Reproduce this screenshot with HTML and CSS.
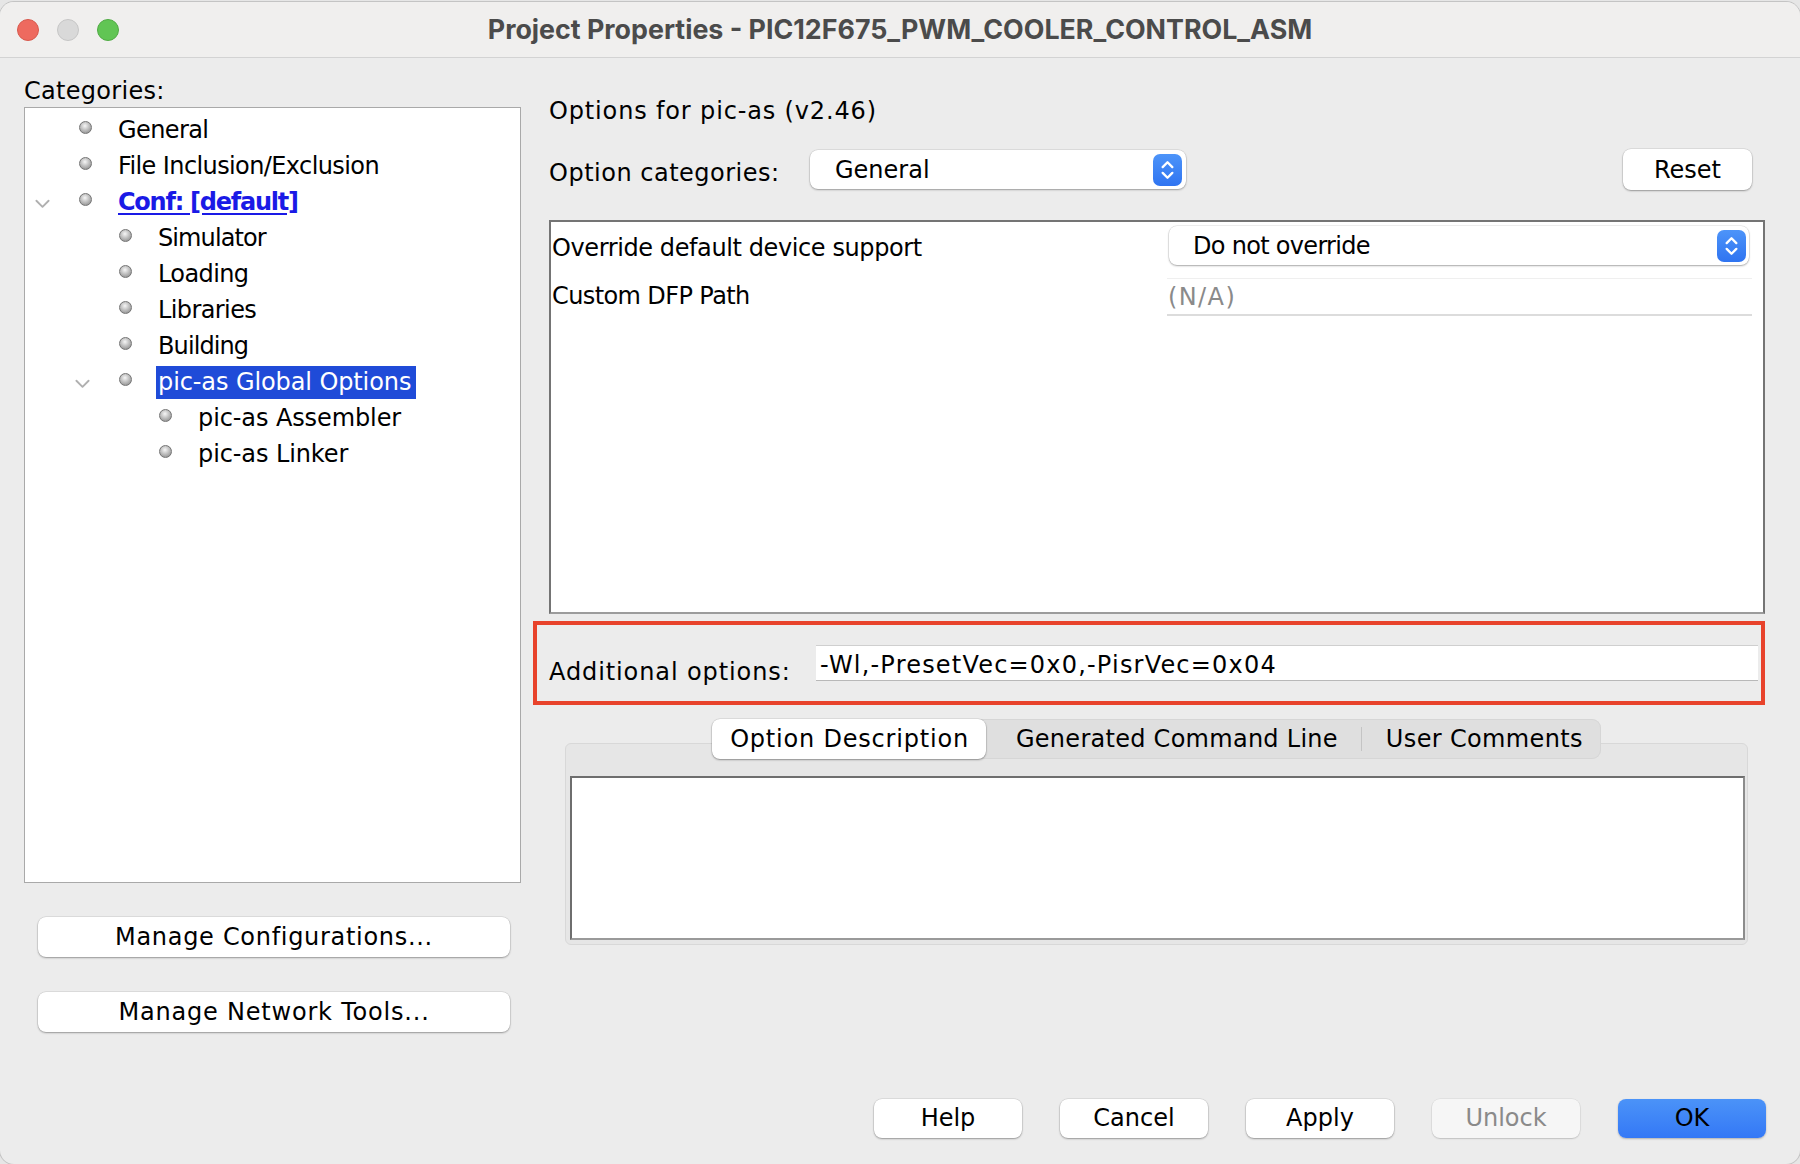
FILE: index.html
```html
<!DOCTYPE html>
<html>
<head>
<meta charset="utf-8">
<title>Project Properties</title>
<link rel="stylesheet" href="styles.css">
</head>
<body>
<div class="window">
  <div class="titlebar">
    <div class="lights">
      <span class="light red"></span>
      <span class="light gray"></span>
      <span class="light green"></span>
    </div>
    <div class="title">Project Properties - PIC12F675_PWM_COOLER_CONTROL_ASM</div>
    <div></div>
  </div>

  <div class="content">
    <div class="left">
      <div class="cat-label">Categories:</div>
      <div class="tree">
        <div class="row lvl0"><span class="tw"></span><span class="bullet"></span><span class="label">General</span></div>
        <div class="row lvl0"><span class="tw"></span><span class="bullet"></span><span class="label">File Inclusion/Exclusion</span></div>
        <div class="row lvl0"><span class="tw"><svg class="chev" viewBox="0 0 16 10"><path d="M1.5 1.5 L8 8 L14.5 1.5"/></svg></span><span class="bullet"></span><span class="label link">Conf: [default]</span></div>
        <div class="row lvl1"><span class="tw"></span><span class="bullet"></span><span class="label tight">Simulator</span></div>
        <div class="row lvl1"><span class="tw"></span><span class="bullet"></span><span class="label">Loading</span></div>
        <div class="row lvl1"><span class="tw"></span><span class="bullet"></span><span class="label">Libraries</span></div>
        <div class="row lvl1"><span class="tw"></span><span class="bullet"></span><span class="label tight">Building</span></div>
        <div class="row lvl1"><span class="tw"><svg class="chev" viewBox="0 0 16 10"><path d="M1.5 1.5 L8 8 L14.5 1.5"/></svg></span><span class="bullet"></span><span class="label pic selected">pic-as Global Options</span></div>
        <div class="row lvl2"><span class="tw"></span><span class="bullet"></span><span class="label pic">pic-as Assembler</span></div>
        <div class="row lvl2"><span class="tw"></span><span class="bullet"></span><span class="label pic">pic-as Linker</span></div>
      </div>
      <div class="btn wide first">Manage Configurations...</div>
      <div class="btn wide second">Manage Network Tools...</div>
    </div>

    <div class="right">
      <div class="opts-title">Options for pic-as (v2.46)</div>
      <div class="cat-row">
        <div class="cat-row-label">Option categories:</div>
        <div class="select cat-select">
          <span class="select-text">General</span>
          <span class="stepper"><svg viewBox="0 0 30 32"><path d="M10 13 L15 8 L20 13 M10 19 L15 24 L20 19"/></svg></span>
        </div>
        <div class="btn reset">Reset</div>
      </div>

      <div class="table">
        <div class="prop-row first-row">
          <div class="prop-name override">Override default device support</div>
          <div class="select prop-select">
            <span class="select-text dno">Do not override</span>
            <span class="stepper"><svg viewBox="0 0 30 32"><path d="M10 13 L15 8 L20 13 M10 19 L15 24 L20 19"/></svg></span>
          </div>
        </div>
        <div class="prop-row second-row">
          <div class="prop-name dfp">Custom DFP Path</div>
          <div class="na-field">(N/A)</div>
        </div>
      </div>

      <div class="red-box">
        <div class="add-label">Additional options:</div>
        <div class="add-field">-Wl,-PresetVec=0x0,-PisrVec=0x04</div>
      </div>

      <div class="tabs-wrap">
        <div class="tabbar">
          <div class="tabgroup">
            <div class="tab active">Option Description</div>
            <div class="tab gen">Generated Command Line</div>
            <div class="tab-sep"></div>
            <div class="tab user">User Comments</div>
          </div>
        </div>
        <div class="panel">
          <div class="desc"></div>
        </div>
      </div>
    </div>
  </div>

  <div class="footer">
    <div class="btn foot">Help</div>
    <div class="btn foot">Cancel</div>
    <div class="btn foot">Apply</div>
    <div class="btn foot disabled">Unlock</div>
    <div class="btn foot ok">OK</div>
  </div>
</div>
</body>
</html>
```

FILE: styles.css
```css
html, body {
  margin: 0;
  padding: 0;
}
body {
  width: 1800px;
  height: 1164px;
  overflow: hidden;
  background: #e6e6e6;
  font-family: "DejaVu Sans", "Liberation Sans", sans-serif;
  font-size: 24px;
  color: #000;
}

.window {
  margin-top: 2px;
  height: 1162px;
  box-sizing: border-box;
  background: #ececec;
  border-radius: 14px;
  box-shadow: 0 0 0 1px #c4c4c4;
  display: flex;
  flex-direction: column;
  overflow: hidden;
}

/* title bar */
.titlebar {
  flex: none;
  height: 55px;
  background: #f0efee;
  border-bottom: 1px solid #d3d3d3;
  display: grid;
  grid-template-columns: 1fr auto 1fr;
  align-items: center;
}
.lights {
  display: flex;
  gap: 18px;
  padding-left: 17px;
}
.light {
  width: 22px;
  height: 22px;
  border-radius: 50%;
  box-sizing: border-box;
}
.light.red { background: #ee6a5f; border: 1px solid #d8594d; }
.light.gray { background: #d9d9d9; border: 1px solid #c6c6c6; }
.light.green { background: #61c554; border: 1px solid #50ab44; }
.title {
  font-family: "Inter", "Liberation Sans", sans-serif;
  font-weight: 700;
  font-size: 26.8px;
  color: #4b4b4b;
  white-space: nowrap;
  padding-bottom: 2px;
}

/* content */
.content {
  display: flex;
  padding: 18px 0 0 24px;
}
.left {
  width: 497px;
  flex: none;
  display: flex;
  flex-direction: column;
}
.cat-label {
  line-height: 30px;
  height: 30px;
  margin-bottom: 1px;
  letter-spacing: 0.3px;
}
.tree {
  height: 776px;
  box-sizing: border-box;
  background: #fff;
  border: 1px solid #a9a9a9;
  padding-top: 4px;
}
.row {
  height: 36px;
  display: flex;
  align-items: center;
}
.row.lvl1 { padding-left: 40px; }
.row.lvl2 { padding-left: 80px; }
.tw {
  width: 55px;
  flex: none;
  display: flex;
  align-items: center;
}
.chev {
  width: 15px;
  height: 10px;
  margin-left: 10px;
  margin-top: 4px;
  fill: none;
  stroke: #b0b0b0;
  stroke-width: 2;
  stroke-linecap: round;
  stroke-linejoin: round;
}
.bullet {
  width: 13px;
  height: 13px;
  flex: none;
  border-radius: 50%;
  box-sizing: border-box;
  margin-top: -6px;
  margin-left: -1px;
  margin-right: 26px;
  background: radial-gradient(circle at 45% 35%, #f6f6f6 0%, #c0c0c0 45%, #808080 100%);
  border: 1px solid #747474;
}
.label {
  white-space: nowrap;
  line-height: 33px;
  letter-spacing: -0.6px;
}
.label.tight { letter-spacing: -0.9px; }
.label.pic { letter-spacing: -0.1px; }
.label.link {
  color: #1a1ae6;
  font-weight: bold;
  letter-spacing: -1.25px;
  text-decoration: underline;
  text-underline-offset: 3px;
}
.label.selected {
  background: #1f4bd8;
  color: #fff;
  margin-left: -2px;
  padding: 0 5px 0 2px;
}

.btn {
  background: #fff;
  border-radius: 8px;
  box-shadow: 0 1px 2px rgba(0, 0, 0, 0.32), 0 0 0 0.5px rgba(0, 0, 0, 0.12);
  display: flex;
  align-items: center;
  justify-content: center;
  white-space: nowrap;
  box-sizing: border-box;
}
.btn.wide {
  height: 40px;
  margin: 0 11px 0 14px;
  letter-spacing: 0.7px;
}
.btn.wide.first { margin-top: 34px; }
.btn.wide.second { margin-top: 35px; letter-spacing: 0.8px; }

/* right side */
.right {
  flex: none;
  width: 1232px;
  margin-left: 12px;
  display: flex;
  flex-direction: column;
}
.opts-title {
  margin: 20px 0 0 16px;
  line-height: 30px;
  letter-spacing: 0.85px;
}
.cat-row {
  margin-top: 23px;
  height: 41px;
  display: flex;
  align-items: center;
  padding-left: 16px;
}
.cat-row-label {
  width: 261px;
  flex: none;
  padding-top: 6px;
  letter-spacing: 0.5px;
}
.select {
  background: #fff;
  border-radius: 8px;
  box-shadow: 0 1px 2px rgba(0, 0, 0, 0.3), 0 0 0 0.5px rgba(0, 0, 0, 0.12);
  display: flex;
  align-items: center;
  box-sizing: border-box;
}
.select-text {
  flex: 1;
  white-space: nowrap;
}
.select-text.dno { letter-spacing: -0.7px; }
.cat-select {
  width: 376px;
  height: 39px;
  padding-left: 25px;
  padding-right: 4px;
}
.stepper {
  width: 29px;
  height: 32px;
  flex: none;
  border-radius: 7px;
  background: linear-gradient(#4d94f9, #2f74f1);
  display: flex;
}
.stepper svg {
  width: 29px;
  height: 32px;
  fill: none;
  stroke: #fff;
  stroke-width: 2.4;
  stroke-linecap: round;
  stroke-linejoin: round;
}
.btn.reset {
  margin-left: auto;
  margin-right: 13px;
  width: 129px;
  height: 41px;
}

.table {
  margin: 30px 0 0 16px;
  height: 394px;
  box-sizing: border-box;
  background: #fff;
  border: 2px solid #747474;
  border-bottom-color: #9c9c9c;
  padding: 4px 11px 0 1px;
}
.prop-row {
  display: grid;
  grid-template-columns: 615px 1fr;
  align-items: center;
}
.prop-name.override { letter-spacing: -0.4px; padding-top: 4px; }
.prop-name.dfp { letter-spacing: -0.6px; }
.prop-select {
  height: 39px;
  padding-left: 24px;
  padding-right: 3px;
  margin-left: 2px;
  margin-right: 3px;
}
.prop-row.second-row { margin-top: 13px; }
.prop-row.second-row .prop-name { padding-bottom: 2px; }
.na-field {
  height: 38px;
  box-sizing: border-box;
  border-top: 1px solid #efefef;
  border-bottom: 2px solid #dcdcdc;
  color: #8a8a8a;
  padding-left: 1px;
  letter-spacing: 1.4px;
  display: flex;
  align-items: center;
}

.red-box {
  margin-top: 7px;
  height: 84px;
  box-sizing: border-box;
  border: 4px solid #e8432b;
  display: flex;
  align-items: center;
  padding: 0 3px 0 12px;
}
.add-label {
  width: 267px;
  flex: none;
  padding-top: 17px;
  letter-spacing: 0.9px;
}
.add-field {
  flex: 1;
  height: 36px;
  box-sizing: border-box;
  background: #fff;
  border-top: 1px solid #cfcfcf;
  border-bottom: 1px solid #b8b8b8;
  padding: 4px 0 0 4px;
  letter-spacing: 1.2px;
  display: flex;
  align-items: center;
  white-space: nowrap;
}

.tabs-wrap {
  margin: 14px 17px 0 32px;
}
.tabbar {
  height: 40px;
  display: flex;
  justify-content: center;
  position: relative;
  z-index: 1;
}
.tabgroup {
  display: flex;
  align-items: center;
  background: #dfdfdf;
  border-radius: 9px;
  box-shadow: inset 0 0 0 1px #d6d6d6;
  height: 40px;
}
.tab {
  height: 40px;
  display: flex;
  align-items: center;
  white-space: nowrap;
  box-sizing: border-box;
}
.tab.active {
  background: #fff;
  border-radius: 8px;
  box-shadow: 0 1px 2px rgba(0, 0, 0, 0.35), 0 0 0 0.5px rgba(0, 0, 0, 0.12);
  padding: 0 17px 0 18px;
  letter-spacing: 0.8px;
}
.tab.gen { padding: 0 23px 0 30px; letter-spacing: 0.27px; }
.tab.user { padding: 0 18px 0 24px; letter-spacing: 0.35px; }
.tab-sep {
  width: 1px;
  height: 24px;
  background: #c4c4c4;
}
.panel {
  margin-top: -16px;
  height: 202px;
  box-sizing: border-box;
  background: #e6e6e6;
  border: 1px solid #d8d8d8;
  border-radius: 6px;
  padding: 32px 2px 4px 4px;
}
.desc {
  height: 164px;
  box-sizing: border-box;
  background: #fff;
  border: 2px solid #6e6e6e;
  border-right-color: #8c8c8c;
  border-bottom-color: #9a9a9a;
}

/* footer */
.footer {
  margin-top: auto;
  display: flex;
  justify-content: flex-end;
  gap: 38px;
  padding: 0 34px 26px 0;
}
.btn.foot {
  width: 148px;
  height: 39px;
  padding-bottom: 2px;
}
.btn.foot.disabled {
  background: #f6f6f6;
  color: #8a8a8a;
  box-shadow: 0 1px 1.5px rgba(0, 0, 0, 0.15), 0 0 0 0.5px rgba(0, 0, 0, 0.08);
}
.btn.foot.ok {
  background: linear-gradient(#4b93f8, #3478f6);
  box-shadow: 0 1px 2px rgba(0, 0, 0, 0.25);
}
```
